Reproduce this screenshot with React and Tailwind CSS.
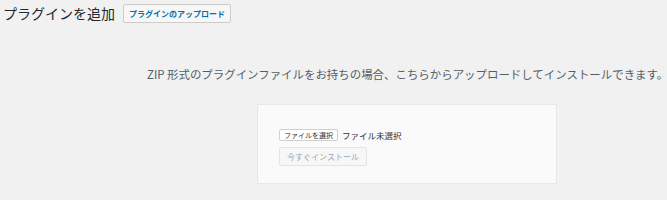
export default function App() {
  const font = { fontFamily: '"Noto Sans CJK JP", "Noto Sans", sans-serif' };
  return (
    <div
      className="w-[667px] h-[200px] bg-[#f1f1f1] overflow-hidden text-[#23282d]"
      style={font}
    >
      <div className="flex items-center pl-[3px] pt-[4px] h-[19px] box-content">
        <h1 className="text-[14px] leading-[19px] font-normal text-[#23282d] tracking-[0px]">
          プラグインを追加
        </h1>
        <button className="ml-[8px] h-[19px] px-[5px] border border-[#cccccc] bg-[#f7f7f7] rounded-[2px] text-[8px] leading-[17px] text-[#0073aa] font-bold">
          プラグインのアップロード
        </button>
      </div>
      <p className="mt-[43px] pl-[147px] text-[11.45px] leading-[16px] text-[#555d66] whitespace-nowrap">
        ZIP 形式のプラグインファイルをお持ちの場合、こちらからアップロードしてインストールできます。
      </p>
      <div className="mt-[22px] ml-[257px] w-[300px] h-[80px] bg-[#fafafa] border border-[#e8e8e8] pl-[21px] pt-[24px]">
        <div className="flex items-center">
          <button className="h-[12px] px-[4px] border border-[#d0d0d0] bg-white rounded-[2px] text-[7px] leading-[10px] text-[#333]">
            ファイルを選択
          </button>
          <span className="ml-[4px] text-[8.5px] leading-[12px] text-[#333]">ファイル未選択</span>
        </div>
        <button
          disabled
          className="mt-[3px] h-[19px] w-[88px] border border-[#e4e4e4] bg-[#f7f7f7] rounded-[2px] text-[8px] leading-[17px] text-[#a0a5aa]"
        >
          今すぐインストール
        </button>
      </div>
    </div>
  );
}
